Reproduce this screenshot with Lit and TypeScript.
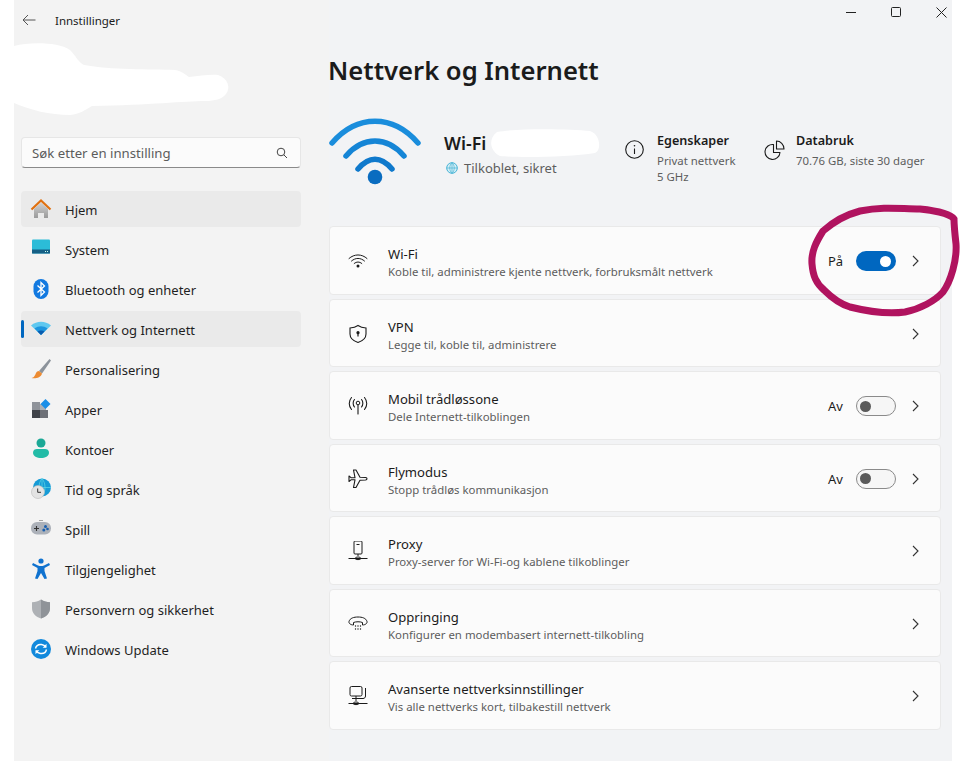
import { LitElement, html, css, svg } from "lit";
import { customElement } from "lit/decorators.js";

const nav = [
  ["home", "Hjem", "sel"],
  ["system", "System", ""],
  ["bt", "Bluetooth og enheter", ""],
  ["net", "Nettverk og Internett", "sel cur"],
  ["brush", "Personalisering", ""],
  ["apps", "Apper", ""],
  ["acct", "Kontoer", ""],
  ["time", "Tid og språk", ""],
  ["game", "Spill", ""],
  ["access", "Tilgjengelighet", ""],
  ["shield", "Personvern og sikkerhet", ""],
  ["update", "Windows Update", ""],
];

const navIcons: Record<string, any> = {
  home: svg`<defs><linearGradient id="hg" x1="0" y1="0" x2="0" y2="1"><stop offset="0" stop-color="#d2d2d2"/><stop offset="1" stop-color="#9a9a9a"/></linearGradient></defs><path d="M4 11 11 4.500 18 11V20H14V15H8V20H4Z" fill="url(#hg)"/><path d="M1.500 11.500 11 2.500 20.500 11.500" fill="none" stroke="#e0700f" stroke-width="2.200"/>`,
  system: svg`<rect x="2" y="1.500" width="18" height="14" rx="1" fill="#2bbcd8"/><rect x="2" y="11.500" width="18" height="4" fill="#155f85"/><rect x="15" y="13" width="1" height="1" fill="#cfe"/><rect x="17" y="13" width="1" height="1" fill="#cfe"/>`,
  bt: svg`<rect x="3.500" y="1" width="15" height="20" rx="7.500" fill="#1279e0"/><path d="M7.500 7.500 14.500 14 11 17.500V4.500L14.500 8 7.500 14.500" fill="none" stroke="#fff" stroke-width="1.300"/>`,
  net: svg`<path d="M1 7.500C7 2.500 15 2.500 21 7.500L11 17Z" fill="#5fc8f0"/><path d="M4.500 10.500C8.500 7.500 13.500 7.500 17.500 10.500L11 17Z" fill="#1d95de"/><path d="M7.500 13.500C9.500 12 12.500 12 14.500 13.500L11 17Z" fill="#0a5cae"/>`,
  brush: svg`<path d="M9 13 19.500 1 21 2.500 12 15.500Z" fill="#8c939b"/><path d="M9 13C6 13 6 16 4.500 18 3.500 19.500 2.500 19.800 1.500 20 5 20.800 11 20 12 15.500Z" fill="#ec8b32"/>`,
  apps: svg`<rect x="2" y="4" width="8" height="8" fill="#8f939a"/><rect x="2" y="12" width="8" height="8" fill="#3f4248"/><rect x="10" y="12" width="8" height="8" fill="#6d7077"/><rect x="10" y="6" width="6" height="6" fill="#aab0b6"/><path d="M15.500 1 20.500 6 15.500 11 10.500 6Z" fill="#1a8fe8"/>`,
  acct: svg`<circle cx="11" cy="5" r="4.500" fill="#1ba896"/><path d="M3 14.500C3 12 5 11 7 11H15C17 11 19 12 19 14.500 19 18.500 15 20 11 20 7 20 3 18.500 3 14.500Z" fill="#22bba6"/>`,
  time: svg`<circle cx="12" cy="9.500" r="9" fill="#169bd6"/><path d="M12 .5V18.500M3 9.500H21M12 .5C8 5 8 14 12 18.500M12 .5C16 5 16 14 12 18.500" fill="none" stroke="#5fd8e6" stroke-width=".7"/><circle cx="8" cy="14" r="6.500" fill="#e3e3e3" stroke="#b9b9b9" stroke-width=".6"/><path d="M7.700 10.500V14.300H11" fill="none" stroke="#333" stroke-width="1"/>`,
  game: svg`<rect x="1" y="4" width="20" height="12.500" rx="6" fill="#acb1b9"/><path d="M4 10.500H9M6.500 8V13" stroke="#333" stroke-width="1.100"/><circle cx="15.500" cy="8.500" r="1.500" fill="#1a5fae"/><circle cx="17.500" cy="11" r="1.300" fill="#1a5fae"/><circle cx="13.800" cy="12" r="1.500" fill="#1a5fae"/><path d="M10 2V3M12 2V3" stroke="#555"/>`,
  access: svg`<circle cx="11" cy="3" r="2.600" fill="#0f72cf"/><path d="M3 5 8 7.500C10 8.300 12 8.300 14 7.500L19 5 20 7 14.500 10V13L17 20.500 14.500 21 11 15 7.500 21 5 20.500 7.500 13V10L2 7Z" fill="#0f72cf"/>`,
  shield: svg`<path d="M11 1.500C14 3.500 16.500 4 20 4.200V10C20 15.500 16 19 11 20.500 6 19 2 15.500 2 10V4.200C5.500 4 8 3.500 11 1.500Z" fill="#aeb1b5"/><path d="M11 1.500C14 3.500 16.500 4 20 4.200V10C20 15.500 16 19 11 20.500Z" fill="#8f9398"/>`,
  update: svg`<circle cx="11" cy="11" r="10" fill="#1189dc"/><path d="M5.500 10.500C6.200 7.500 9 6.200 11.500 6.500 13.500 6.800 15 7.800 15.800 9M16.500 11.500C15.800 14.500 13 15.800 10.500 15.500 8.500 15.200 7 14.200 6.200 13" fill="none" stroke="#fff" stroke-width="1.400"/><path d="M16.500 5.800V9.700H12.700ZM5.500 16.200V12.300H9.300Z" fill="#fff"/>`,
};

const rowIcons: Record<string, any> = {
  wifi: svg`<path d="M1 7.500C6.300 2.700 13.700 2.700 19 7.500M3.500 10C7.500 6.500 12.500 6.500 16.500 10M6.200 12.500C8.500 10.500 11.500 10.500 13.800 12.500" fill="none" stroke="#1a1a1a" stroke-width="1" stroke-linecap="round"/><circle cx="10" cy="15" r="1.500" fill="#1a1a1a"/>`,
  vpn: svg`<path d="M10 1.500C12.500 3.200 15 3.800 18 4V10C18 14 14.500 17 10 18.500 5.500 17 2 14 2 10V4C5 3.800 7.500 3.200 10 1.500Z" fill="none" stroke="#1a1a1a" stroke-width="1.100"/><circle cx="10" cy="8.700" r="1.600" fill="#1a1a1a"/><path d="M10 9V12.500" stroke="#1a1a1a" stroke-width="1.200"/>`,
  hotspot: svg`<circle cx="10" cy="7" r="1.800" fill="none" stroke="#1a1a1a"/><path d="M10 9V18M6.500 3.500C4.700 5.500 4.700 9 6.500 11M13.500 3.500C15.300 5.500 15.300 9 13.500 11M3.500 1.500C.5 5 .5 10 3.500 13.500M16.500 1.500C19.500 5 19.500 10 16.500 13.500" fill="none" stroke="#1a1a1a" stroke-width="1.100" stroke-linecap="round"/>`,
  plane: svg`<path d="M1 7 3 8.700H7L5.500 1 8 1 12 8.200 17.500 8.500C19.500 8.700 19.500 10.800 17.500 11L12 11.300 8 18.500H5.500L7 10.800H3L1 12.500V7Z" fill="none" stroke="#1a1a1a" stroke-width="1.100" stroke-linejoin="round"/>`,
  proxy: svg`<rect x="6" y="0" width="8" height="13" rx="1" fill="none" stroke="#1a1a1a"/><path d="M8.500 3.500H11.500" stroke="#1a1a1a"/><path d="M10 13V15M.5 17.500H19.500" stroke="#1a1a1a"/><path d="M7 17.500C7.500 15.500 12.500 15.500 13 17.500 12.500 19 7.500 19 7 17.500Z" fill="none" stroke="#1a1a1a"/>`,
  dial: svg`<path d="M5.500 11C3 11 .5 9.500 1 7.500 2 4 6 3 10 3S18 4 19 7.500C19.500 9.500 17 11 14.500 11V8.500C12 7.500 8 7.500 5.500 8.500Z" fill="none" stroke="#1a1a1a" stroke-linejoin="round"/><g fill="#1a1a1a"><circle cx="7.500" cy="12" r=".7"/><circle cx="10" cy="12" r=".7"/><circle cx="12.500" cy="12" r=".7"/><circle cx="7.500" cy="15" r=".7"/><circle cx="10" cy="15" r=".7"/><circle cx="12.500" cy="15" r=".7"/></g>`,
  adv: svg`<rect x="2" y="0.500" width="12" height="9.500" rx="1.500" fill="none" stroke="#1a1a1a"/><path d="M17.500 2V10C17.500 11.500 16.500 12.500 15 12.500H4M8 10V15M.5 17.500H19.500" fill="none" stroke="#1a1a1a"/><path d="M5 17.500C5.500 15.500 10.500 15.500 11 17.500 10.500 19 5.500 19 5 17.500Z" fill="none" stroke="#1a1a1a"/>`,
};

const rows: [string, string, string, string][] = [
  ["wifi", "Wi-Fi", "Koble til, administrere kjente nettverk, forbruksmålt nettverk", "På"],
  ["vpn", "VPN", "Legge til, koble til, administrere", ""],
  ["hotspot", "Mobil trådløssone", "Dele Internett-tilkoblingen", "Av"],
  ["plane", "Flymodus", "Stopp trådløs kommunikasjon", "Av"],
  ["proxy", "Proxy", "Proxy-server for Wi-Fi-og kablene tilkoblinger", ""],
  ["dial", "Oppringing", "Konfigurer en modembasert internett-tilkobling", ""],
  ["adv", "Avanserte nettverksinnstillinger", "Vis alle nettverks kort, tilbakestill nettverk", ""],
];

@customElement("app-root")
export class AppRoot extends LitElement {
  static styles = css`
    :host {
      display: block;
      position: relative;
      width: 961px;
      height: 761px;
      overflow: hidden;
      background: #fff;
      font-family: "Noto Sans", "Open Sans", sans-serif;
      color: #1b1b1b;
    }
    .win { display: flex; width: 938px; height: 761px; margin-left: 14px; background: #f2f3f5; }
    .side { width: 315px; flex: none; background: #f3f3f3; padding-left: 7px; padding-right: 28px; box-sizing: border-box; }
    .tbar { display: flex; align-items: center; height: 40px; gap: 19px; font-size: 11.500px; padding-left: 1px; }
    .tbar svg { display: block; }
    .search {
      margin-top: 97px; height: 31px; box-sizing: border-box; display: flex; align-items: center;
      justify-content: space-between; padding: 0 12px 0 10px; background: #fbfbfb; border: 1px solid #e6e6e6;
      border-bottom: 1px solid #8a8a8a; border-radius: 4px; font-size: 13.200px; color: #5c5c5c;
    }
    nav { margin-top: 23px; display: flex; flex-direction: column; gap: 4px; }
    .item { position: relative; height: 36px; display: flex; align-items: center; gap: 13px; padding-left: 9px; border-radius: 4px; font-size: 13px; color: #1f1f1f; }
    .item span { padding-top: 2px; }
    .item.sel { background: #eaeaea; }
    .item.cur::before { content: ""; position: absolute; left: 0; top: 9px; width: 3px; height: 18px; background: #0067c0; border-radius: 2px; }
    .item svg { width: 22px; height: 22px; flex: none; }
    .main { flex: 1; min-width: 0; position: relative; }
    .ctl { display: flex; justify-content: flex-end; align-items: center; gap: 35px; height: 24px; padding-right: 5px; }
    .ctl svg { display: block; }
    h1 { margin: 26px 0 0 -1px; font-size: 25.600px; font-weight: 600; line-height: 42px; height: 42px; }
    .head { display: flex; height: 109px; margin-top: 25px; padding-right: 11px; }
    .big { width: 92px; height: 68px; flex: none; margin-top: 1px; }
    .conn { margin-left: 23px; width: 181px; flex: none; }
    .conn .t { font-size: 17.800px; font-weight: 600; line-height: 24px; margin-top: 14px; }
    .conn .s { display: flex; align-items: center; gap: 6px; margin: 4px 0 0 2px; font-size: 13px; color: #5d5d5d; line-height: 18px; }
    .stat { display: flex; }
    .stat svg { flex: none; margin-top: 23px; }
    .stat .t { font-size: 12.600px; font-weight: 600; line-height: 18px; margin-top: 15px; }
    .stat .s { font-size: 11.400px; color: #5d5d5d; line-height: 16px; margin-top: 3px; }
    .e { width: 139px; flex: none; } .e svg { margin-right: 13px; }
    .d svg { margin-right: 11px; }
    .cards { display: flex; flex-direction: column; gap: 4px; padding-right: 11px; }
    .card {
      height: 68.500px; box-sizing: border-box; display: flex; align-items: center; background: #fbfbfb;
      border: 1px solid #e9e9e9; border-radius: 4px; padding: 2px 21px 0 18px;
    }
    .card .ic { width: 20px; height: 20px; flex: none; margin-right: 20px; }
    .txt { flex: 1; min-width: 0; padding-top: 3px; }
    .txt .t { font-size: 13.100px; line-height: 18px; color: #1b1b1b; }
    .txt .s { font-size: 11.400px; line-height: 17px; color: #5d5d5d; }
    .lbl { font-size: 13px; width: 28px; }
    .tog { width: 40px; height: 20px; box-sizing: border-box; border-radius: 10px; display: flex; align-items: center; margin-right: 16px; }
    .tog.on { background: #0067c0; justify-content: flex-end; padding-right: 5px; }
    .tog.on i { width: 11px; height: 11px; background: #fff; border-radius: 50%; }
    .tog.off { border: 1px solid #8a8a8a; background: #f6f6f6; padding-left: 3px; }
    .tog.off i { width: 11px; height: 11px; background: #5a5a5a; border-radius: 50%; }
    .chev { flex: none; display: block; }
    .over { position: absolute; left: 0; top: 0; pointer-events: none; }
  `;

  render() {
    return html`
      <div class="win">
        <div class="side">
          <div class="tbar">
            <svg width="14" height="12" viewBox="0 0 14 12"><path d="M13.500 6H1M6 1 1 6 6 11" fill="none" stroke="#555" stroke-width="1"/></svg>
            <span>Innstillinger</span>
          </div>
          <div class="search">
            <span>Søk etter en innstilling</span>
            <svg width="12" height="12" viewBox="0 0 12 12"><circle cx="5" cy="5" r="3.800" fill="none" stroke="#444"/><path d="M7.800 7.800 11 11" stroke="#444"/></svg>
          </div>
          <nav>
            ${nav.map(
              ([ic, label, cls]) => html`<div class="item ${cls}">
                <svg viewBox="0 0 22 22">${navIcons[ic]}</svg><span>${label}</span>
              </div>`
            )}
          </nav>
        </div>
        <div class="main">
          <div class="ctl">
            <svg width="10" height="10" viewBox="0 0 10 10"><path d="M0 5.500H10" stroke="#222"/></svg>
            <svg width="10" height="10" viewBox="0 0 10 10"><rect x=".5" y=".5" width="9" height="9" rx="1" fill="none" stroke="#222"/></svg>
            <svg width="11" height="11" viewBox="0 0 11 11"><path d="M.5 .5 10.500 10.500M10.500 .5 .5 10.500" stroke="#222"/></svg>
          </div>
          <h1>Nettverk og Internett</h1>
          <div class="head">
            <svg class="big" viewBox="0 0 92 68">
              <path d="M3 25C28 -4 64 -4 89 25" fill="none" stroke="#1a8ddc" stroke-width="5.500" stroke-linecap="round"/>
              <path d="M17 38C34 18 58 18 75 38" fill="none" stroke="#1585d6" stroke-width="5.500" stroke-linecap="round"/>
              <path d="M29 51C40 38 52 38 63 51" fill="none" stroke="#0f79cc" stroke-width="5.500" stroke-linecap="round"/>
              <circle cx="46" cy="59" r="7.300" fill="#0a6cc0"/>
            </svg>
            <div class="conn">
              <div class="t">Wi-Fi</div>
              <div class="s">
                <svg width="12" height="12" viewBox="0 0 12 12"><circle cx="6" cy="6" r="5.300" fill="#d6eef5" stroke="#45b3d6"/><path d="M6 .7V11.300M.7 6H11.300M6 .7C3 3.500 3 8.500 6 11.300M6 .7C9 3.500 9 8.500 6 11.300" fill="none" stroke="#45b3d6" stroke-width=".7"/></svg>
                <span>Tilkoblet, sikret</span>
              </div>
            </div>
            <div class="stat e">
              <svg width="19" height="19" viewBox="0 0 19 19"><circle cx="9.500" cy="9.500" r="8.800" fill="none" stroke="#1a1a1a" stroke-width="1.100"/><path d="M9.500 8.500V14" stroke="#1a1a1a" stroke-width="1.100"/><circle cx="9.500" cy="5.800" r=".8" fill="#1a1a1a"/></svg>
              <div><div class="t">Egenskaper</div><div class="s">Privat nettverk<br />5 GHz</div></div>
            </div>
            <div class="stat d">
              <svg width="21" height="20" viewBox="0 0 21 20"><path d="M9.500 4.500A7.500 7.500 0 1 0 16 12.500H9.500Z" fill="none" stroke="#1a1a1a" stroke-width="1.100" stroke-linejoin="round"/><path d="M12.500 1C16.500 1 20 4.500 20 9H12.500Z" fill="none" stroke="#1a1a1a" stroke-width="1.100" stroke-linejoin="round"/></svg>
              <div><div class="t">Databruk</div><div class="s">70.76 GB, siste 30 dager</div></div>
            </div>
          </div>
          <div class="cards">
            ${rows.map(
              ([ic, t, s, st]) => html`<div class="card">
                <svg class="ic" viewBox="0 0 20 20">${rowIcons[ic]}</svg>
                <div class="txt"><div class="t">${t}</div><div class="s">${s}</div></div>
                ${st
                  ? html`<span class="lbl">${st}</span><div class="tog ${st === "På" ? "on" : "off"}"><i></i></div>`
                  : ""}
                <svg class="chev" width="7" height="12" viewBox="0 0 7 12"><path d="M1 1 6 6 1 11" fill="none" stroke="#333" stroke-width="1.100"/></svg>
              </div>`
            )}
          </div>
        </div>
      </div>
      <svg class="over" width="961" height="761" viewBox="0 0 961 761">
        <path d="M14 46C30 42 58 42 70 50 76 56 78 62 84 65 110 70 150 69 175 70 182 71 186 75 189 77 200 76 210 74 218 75 228 78 231 88 226 94 222 99 215 101 205 101 185 101 150 105 92 106 85 110 80 114 70 115 50 115 30 110 14 103Z" fill="#fff"/>
        <path d="M497 132C520 128 570 129 590 131 600 134 602 150 595 153 570 157 520 158 500 156 491 152 487 140 497 132Z" fill="#fff"/>
        <path d="M954 219C950 213 930 210 920 209 900 209 885 206 860 211 845 215 832 223 823 231 816 242 811 252 812 264 813 276 816 283 824 290 832 298 840 304 850 307 870 312 890 314 905 312 920 309 935 301 943 292 951 281 957 260 956 244 955 235 954 225 954 219Z" fill="none" stroke="#b0135f" stroke-width="7"/>
      </svg>
    `;
  }
}
